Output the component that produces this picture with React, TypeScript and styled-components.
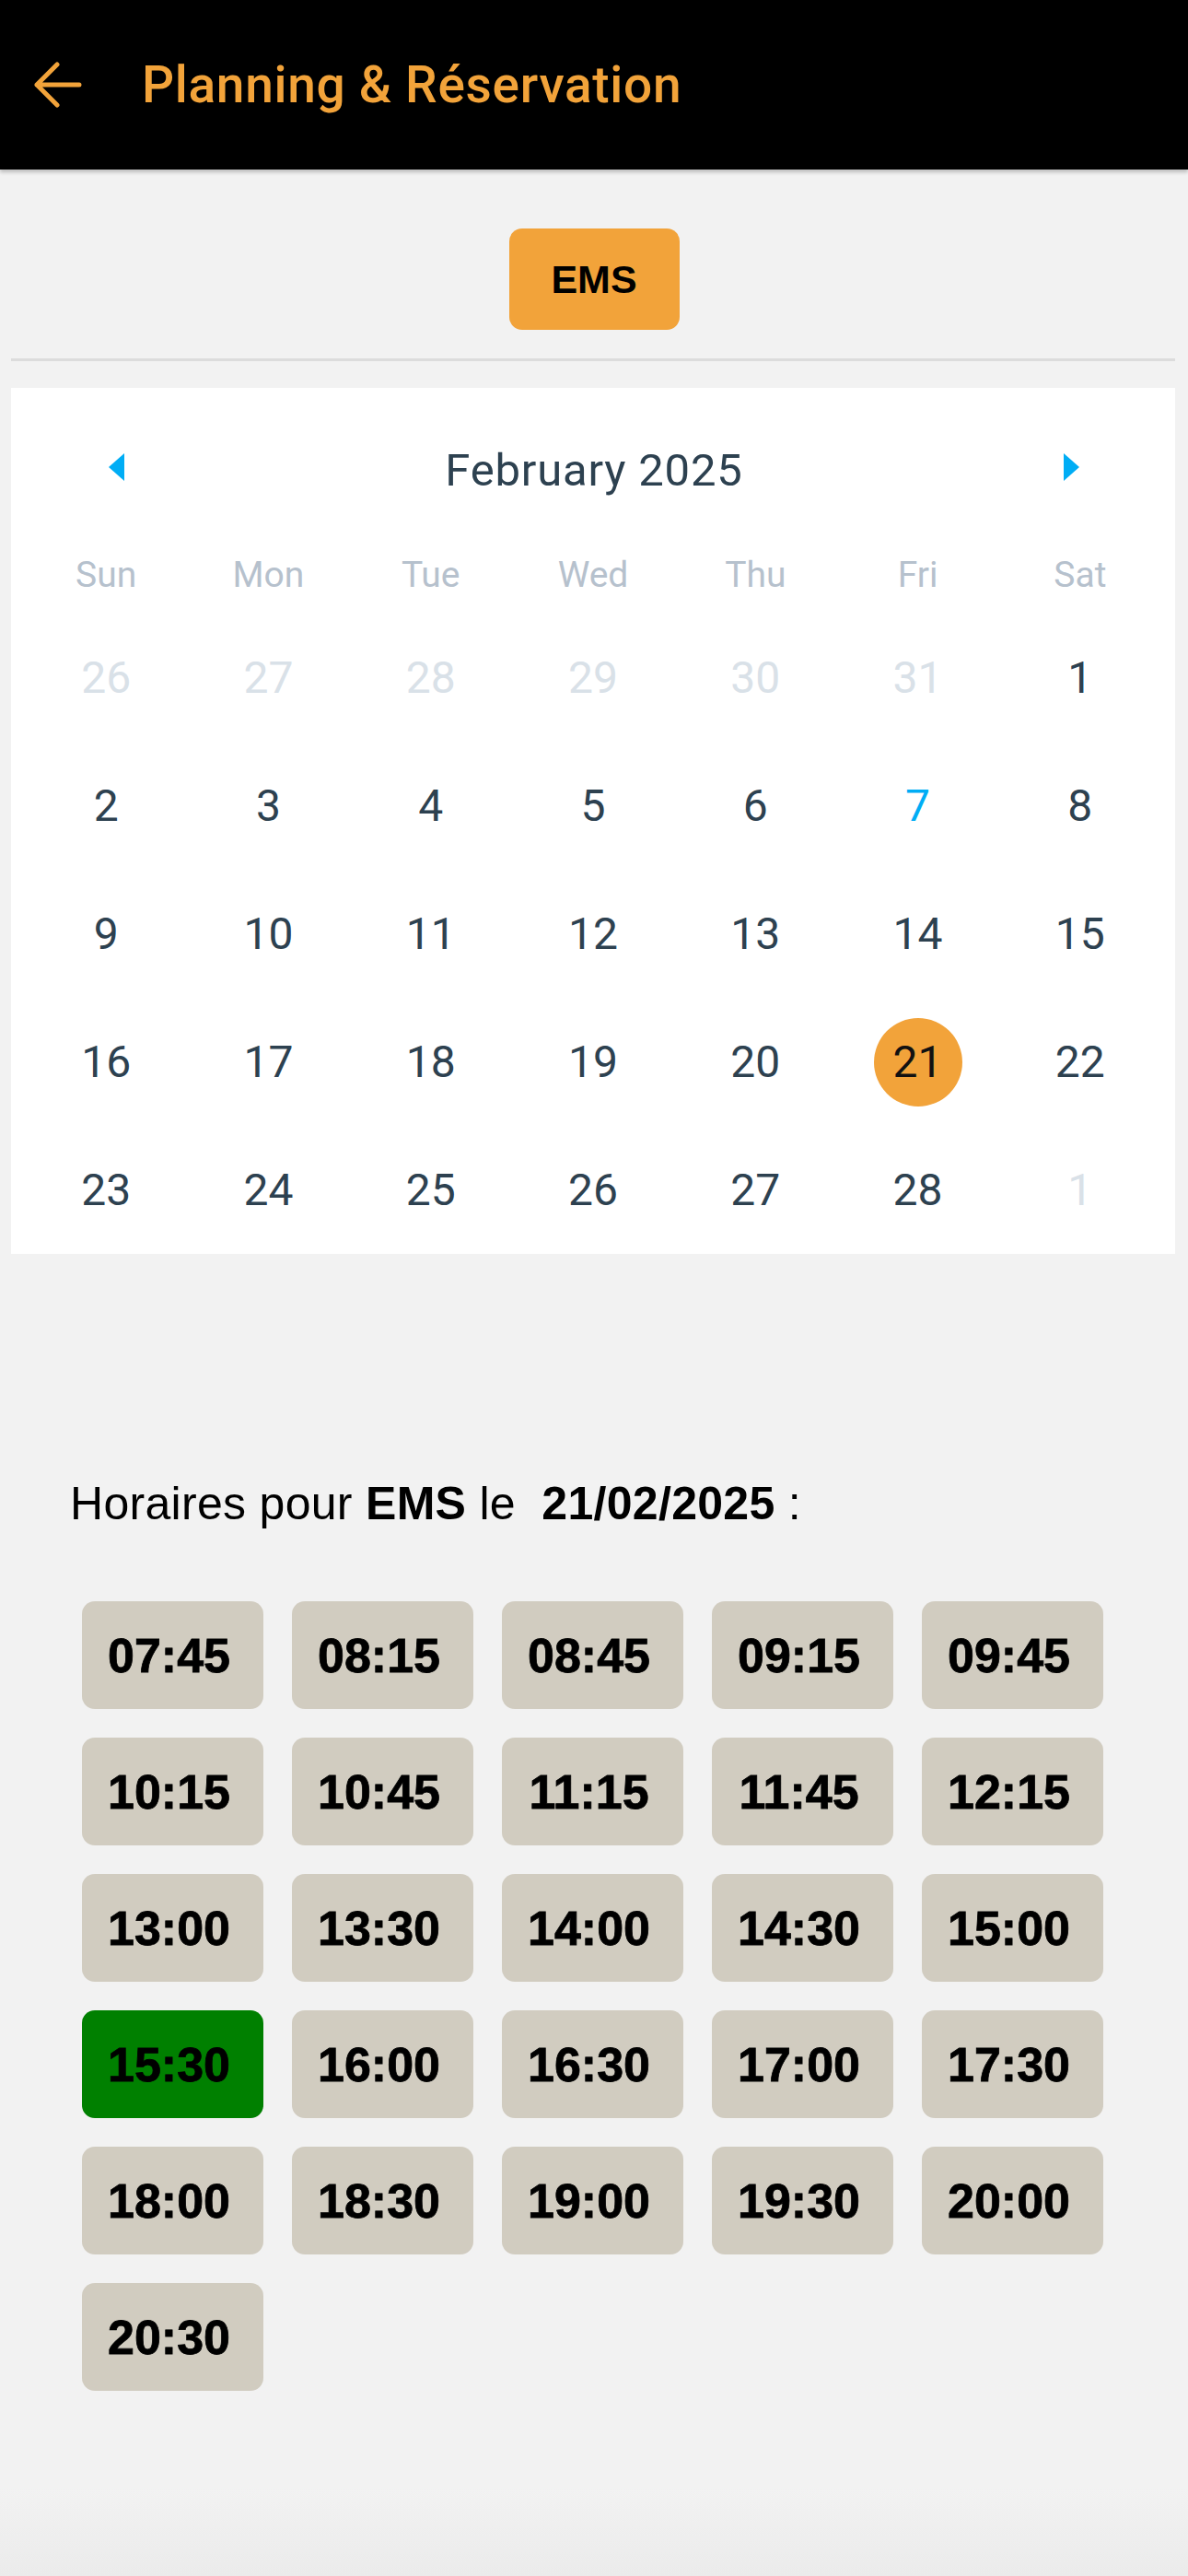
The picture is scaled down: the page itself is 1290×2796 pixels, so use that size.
import React from 'react'
import styled, { createGlobalStyle } from 'styled-components'

// Palette
const colors = {
  orange: '#F2A33A',
  page: '#f2f2f2',
  ink: '#2d4150',
  faded: '#d9e1e8',
  weekday: '#b6c1cd',
  today: '#00adf5',
  slot: '#d1ccc0',
  picked: '#008000',
}

const GlobalStyle = createGlobalStyle`
  html, body {
    margin: 0;
    padding: 0;
  }
  body {
    min-height: 2796px;
    background: linear-gradient(to bottom, ${colors.page} 0, ${colors.page} 2700px, #ebebeb 2796px);
    font-family: Roboto, "Liberation Sans", sans-serif;
  }
`

// Header
const TopBar = styled.header`
  height: 184px;
  background-color: #000;
  display: flex;
  align-items: center;
  padding-left: 35px;
  box-shadow: 0 3px 4px rgba(0, 0, 0, 0.22);
`

const BackButton = styled.button`
  border: none;
  background: none;
  padding: 0;
  display: flex;
  cursor: pointer;
`

const Title = styled.h1`
  margin: 0 0 0 65px;
  color: ${colors.orange};
  font-size: 55px;
  font-weight: 500;
  letter-spacing: 0.7px;
  line-height: 1;
`

// Category tabs
const Tabs = styled.nav`
  display: flex;
  justify-content: center;
  padding-top: 64px;
`

const Tab = styled.button<{ $active?: boolean }>`
  width: 185px;
  height: 110px;
  border: none;
  border-radius: 14px;
  background-color: ${({ $active }) => ($active ? colors.orange : colors.slot)};
  color: #000;
  font-family: "Liberation Sans", Arial, sans-serif;
  font-weight: 700;
  font-size: 43px;
`

const Divider = styled.hr`
  margin: 31px 14px 29px 12px;
  border: none;
  height: 3px;
  background-color: #dcdcdc;
`

// Calendar
const CalendarPanel = styled.section`
  margin: 0 14px 0 12px;
  background-color: #fff;
  padding: 0 15px 0;
`

const MonthRow = styled.div`
  height: 180px;
  display: flex;
  align-items: center;
  justify-content: space-between;
  padding: 0 89px 0 91px;
`

const MonthLabel = styled.span`
  color: ${colors.ink};
  font-size: 49px;
  letter-spacing: 0.8px;
  margin-top: -2px;
`

const Arrow = styled.button`
  border: none;
  background: none;
  padding: 0;
  display: flex;
  margin-top: -8px;
`

const WeekRow = styled.div`
  display: grid;
  grid-template-columns: repeat(7, 1fr);
  height: 46px;
  align-items: center;
  margin-bottom: 19px;
`

const WeekDay = styled.span`
  text-align: center;
  color: ${colors.weekday};
  font-size: 39px;
`

const DayGrid = styled.div`
  display: grid;
  grid-template-columns: repeat(7, 1fr);
  grid-auto-rows: 139px;
`

const DayCell = styled.div`
  display: flex;
  align-items: center;
  justify-content: center;
`

const Day = styled.span<{ $tone: 'normal' | 'off' | 'today' | 'selected' }>`
  width: 96px;
  height: 96px;
  border-radius: 50%;
  display: flex;
  align-items: center;
  justify-content: center;
  font-size: 48px;
  background-color: ${({ $tone }) => ($tone === 'selected' ? colors.orange : 'transparent')};
  color: ${({ $tone }) =>
    $tone === 'off' ? colors.faded : $tone === 'today' ? colors.today : $tone === 'selected' ? '#111' : colors.ink};
`

// Slots
const SlotsSection = styled.section`
  margin-top: 242px;
`

const SlotsTitle = styled.p`
  margin: 0 0 77px 76px;
  font-family: "Liberation Sans", Arial, sans-serif;
  font-size: 50px;
  letter-spacing: 0.3px;
  line-height: 58px;
  color: #000;

  b {
    font-weight: 700;
  }
`

const SlotGrid = styled.div`
  display: grid;
  grid-template-columns: repeat(5, 197px);
  grid-auto-rows: 117px;
  column-gap: 31px;
  row-gap: 31px;
  padding-left: 89px;
`

const Slot = styled.button<{ $picked?: boolean }>`
  border: none;
  border-radius: 14px;
  background-color: ${({ $picked }) => ($picked ? colors.picked : colors.slot)};
  color: #000;
  font-family: "Liberation Sans", Arial, sans-serif;
  font-weight: 700;
  font-size: 52px;
  -webkit-text-stroke: 0.8px #000;
  padding: 0 8px 0 0;
`

const weekDays = ['Sun', 'Mon', 'Tue', 'Wed', 'Thu', 'Fri', 'Sat']

type DayItem = { n: number; tone: 'normal' | 'off' | 'today' | 'selected' }

const buildDays = (): DayItem[] => {
  const days: DayItem[] = []
  for (let i = 26; i <= 31; i++) days.push({ n: i, tone: 'off' })
  for (let i = 1; i <= 28; i++) {
    days.push({ n: i, tone: i === 7 ? 'today' : i === 21 ? 'selected' : 'normal' })
  }
  days.push({ n: 1, tone: 'off' })
  return days
}

const slots = [
  '07:45', '08:15', '08:45', '09:15', '09:45',
  '10:15', '10:45', '11:15', '11:45', '12:15',
  '13:00', '13:30', '14:00', '14:30', '15:00',
  '15:30', '16:00', '16:30', '17:00', '17:30',
  '18:00', '18:30', '19:00', '19:30', '20:00',
  '20:30',
]

export default function App() {
  const days = buildDays()

  return (
    <>
      <GlobalStyle />
      <TopBar>
        <BackButton aria-label="Retour">
          <svg width="54" height="50" viewBox="0 0 54 50" fill="none">
            <path
              d="M51 25H5M27 3L5 25l22 22"
              stroke={colors.orange}
              strokeWidth="5"
              strokeLinecap="round"
              strokeLinejoin="round"
            />
          </svg>
        </BackButton>
        <Title>Planning &amp; Réservation</Title>
      </TopBar>

      <Tabs>
        <Tab $active>EMS</Tab>
      </Tabs>
      <Divider />

      <CalendarPanel>
        <MonthRow>
          <Arrow aria-label="Mois précédent">
            <svg width="18" height="30" viewBox="0 0 18 30">
              <path d="M17 0L0 15l17 15z" fill={colors.today} />
            </svg>
          </Arrow>
          <MonthLabel>February 2025</MonthLabel>
          <Arrow aria-label="Mois suivant">
            <svg width="18" height="30" viewBox="0 0 18 30">
              <path d="M1 0l17 15L1 30z" fill={colors.today} />
            </svg>
          </Arrow>
        </MonthRow>
        <WeekRow>
          {weekDays.map((d) => (
            <WeekDay key={d}>{d}</WeekDay>
          ))}
        </WeekRow>
        <DayGrid>
          {days.map((d, i) => (
            <DayCell key={i}>
              <Day $tone={d.tone}>{d.n}</Day>
            </DayCell>
          ))}
        </DayGrid>
      </CalendarPanel>

      <SlotsSection>
        <SlotsTitle>
          Horaires pour <b>EMS</b> le&nbsp; <b>21/02/2025</b> :
        </SlotsTitle>
        <SlotGrid>
          {slots.map((s) => (
            <Slot key={s} $picked={s === '15:30'}>
              {s}
            </Slot>
          ))}
        </SlotGrid>
      </SlotsSection>
    </>
  )
}
